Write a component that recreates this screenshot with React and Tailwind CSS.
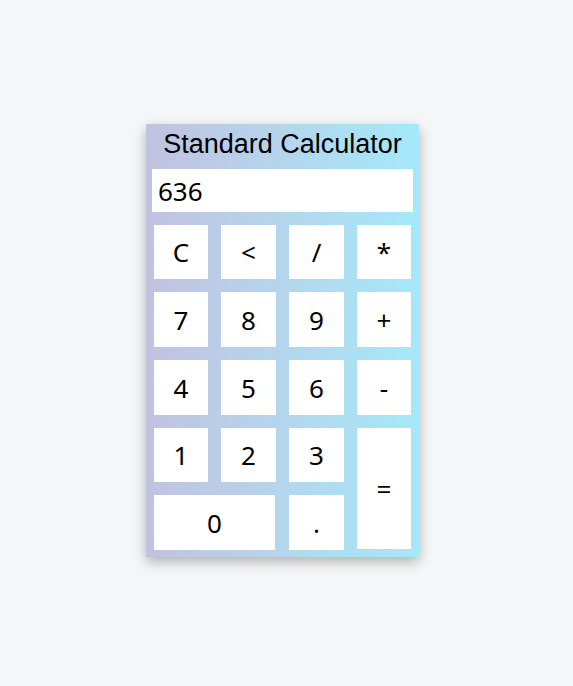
export default function App() {
  const font = { fontFamily: '"Noto Sans", "Open Sans", sans-serif' };
  const btn =
    "bg-white flex items-center justify-center text-[26px] text-black leading-none";
  return (
    <div className="min-h-[686px] w-full bg-[#f5f6f8] pt-[124px] pl-[146px]">
      <div className="w-[273px] bg-gradient-to-r from-[#c1c2e0] to-[#a3e9f9] shadow-[0_5px_12px_rgba(0,0,0,0.28)] pb-[7px]">
        <div
          className="h-[39px] flex items-center justify-center text-[27px] text-black leading-none pt-[1px]"
          style={{ fontFamily: '"Liberation Sans", Arial, sans-serif' }}
        >
          Standard Calculator
        </div>
        <div
          className="mx-[6px] mt-[6px] h-[43px] bg-white flex items-center pl-[6px] text-[26px] text-black leading-none"
          style={font}
        >
          636
        </div>
        <div
          className="mt-[13px] px-[8px] grid grid-cols-[54px_55px_55px_54px] grid-rows-[54px_55px_55px_54px_55px] gap-[13px]"
          style={font}
        >
          <div className={btn}>C</div>
          <div className={btn}>&lt;</div>
          <div className={btn}>/</div>
          <div className={btn}>*</div>
          <div className={btn}>7</div>
          <div className={btn}>8</div>
          <div className={btn}>9</div>
          <div className={btn}>+</div>
          <div className={btn}>4</div>
          <div className={btn}>5</div>
          <div className={btn}>6</div>
          <div className={btn}>-</div>
          <div className={btn}>1</div>
          <div className={btn}>2</div>
          <div className={btn}>3</div>
          <div className={`${btn} row-span-2 mb-[1px]`}>=</div>
          <div className={`${btn} col-span-2 mr-[1px]`}>0</div>
          <div className={btn}>.</div>
        </div>
      </div>
    </div>
  );
}
